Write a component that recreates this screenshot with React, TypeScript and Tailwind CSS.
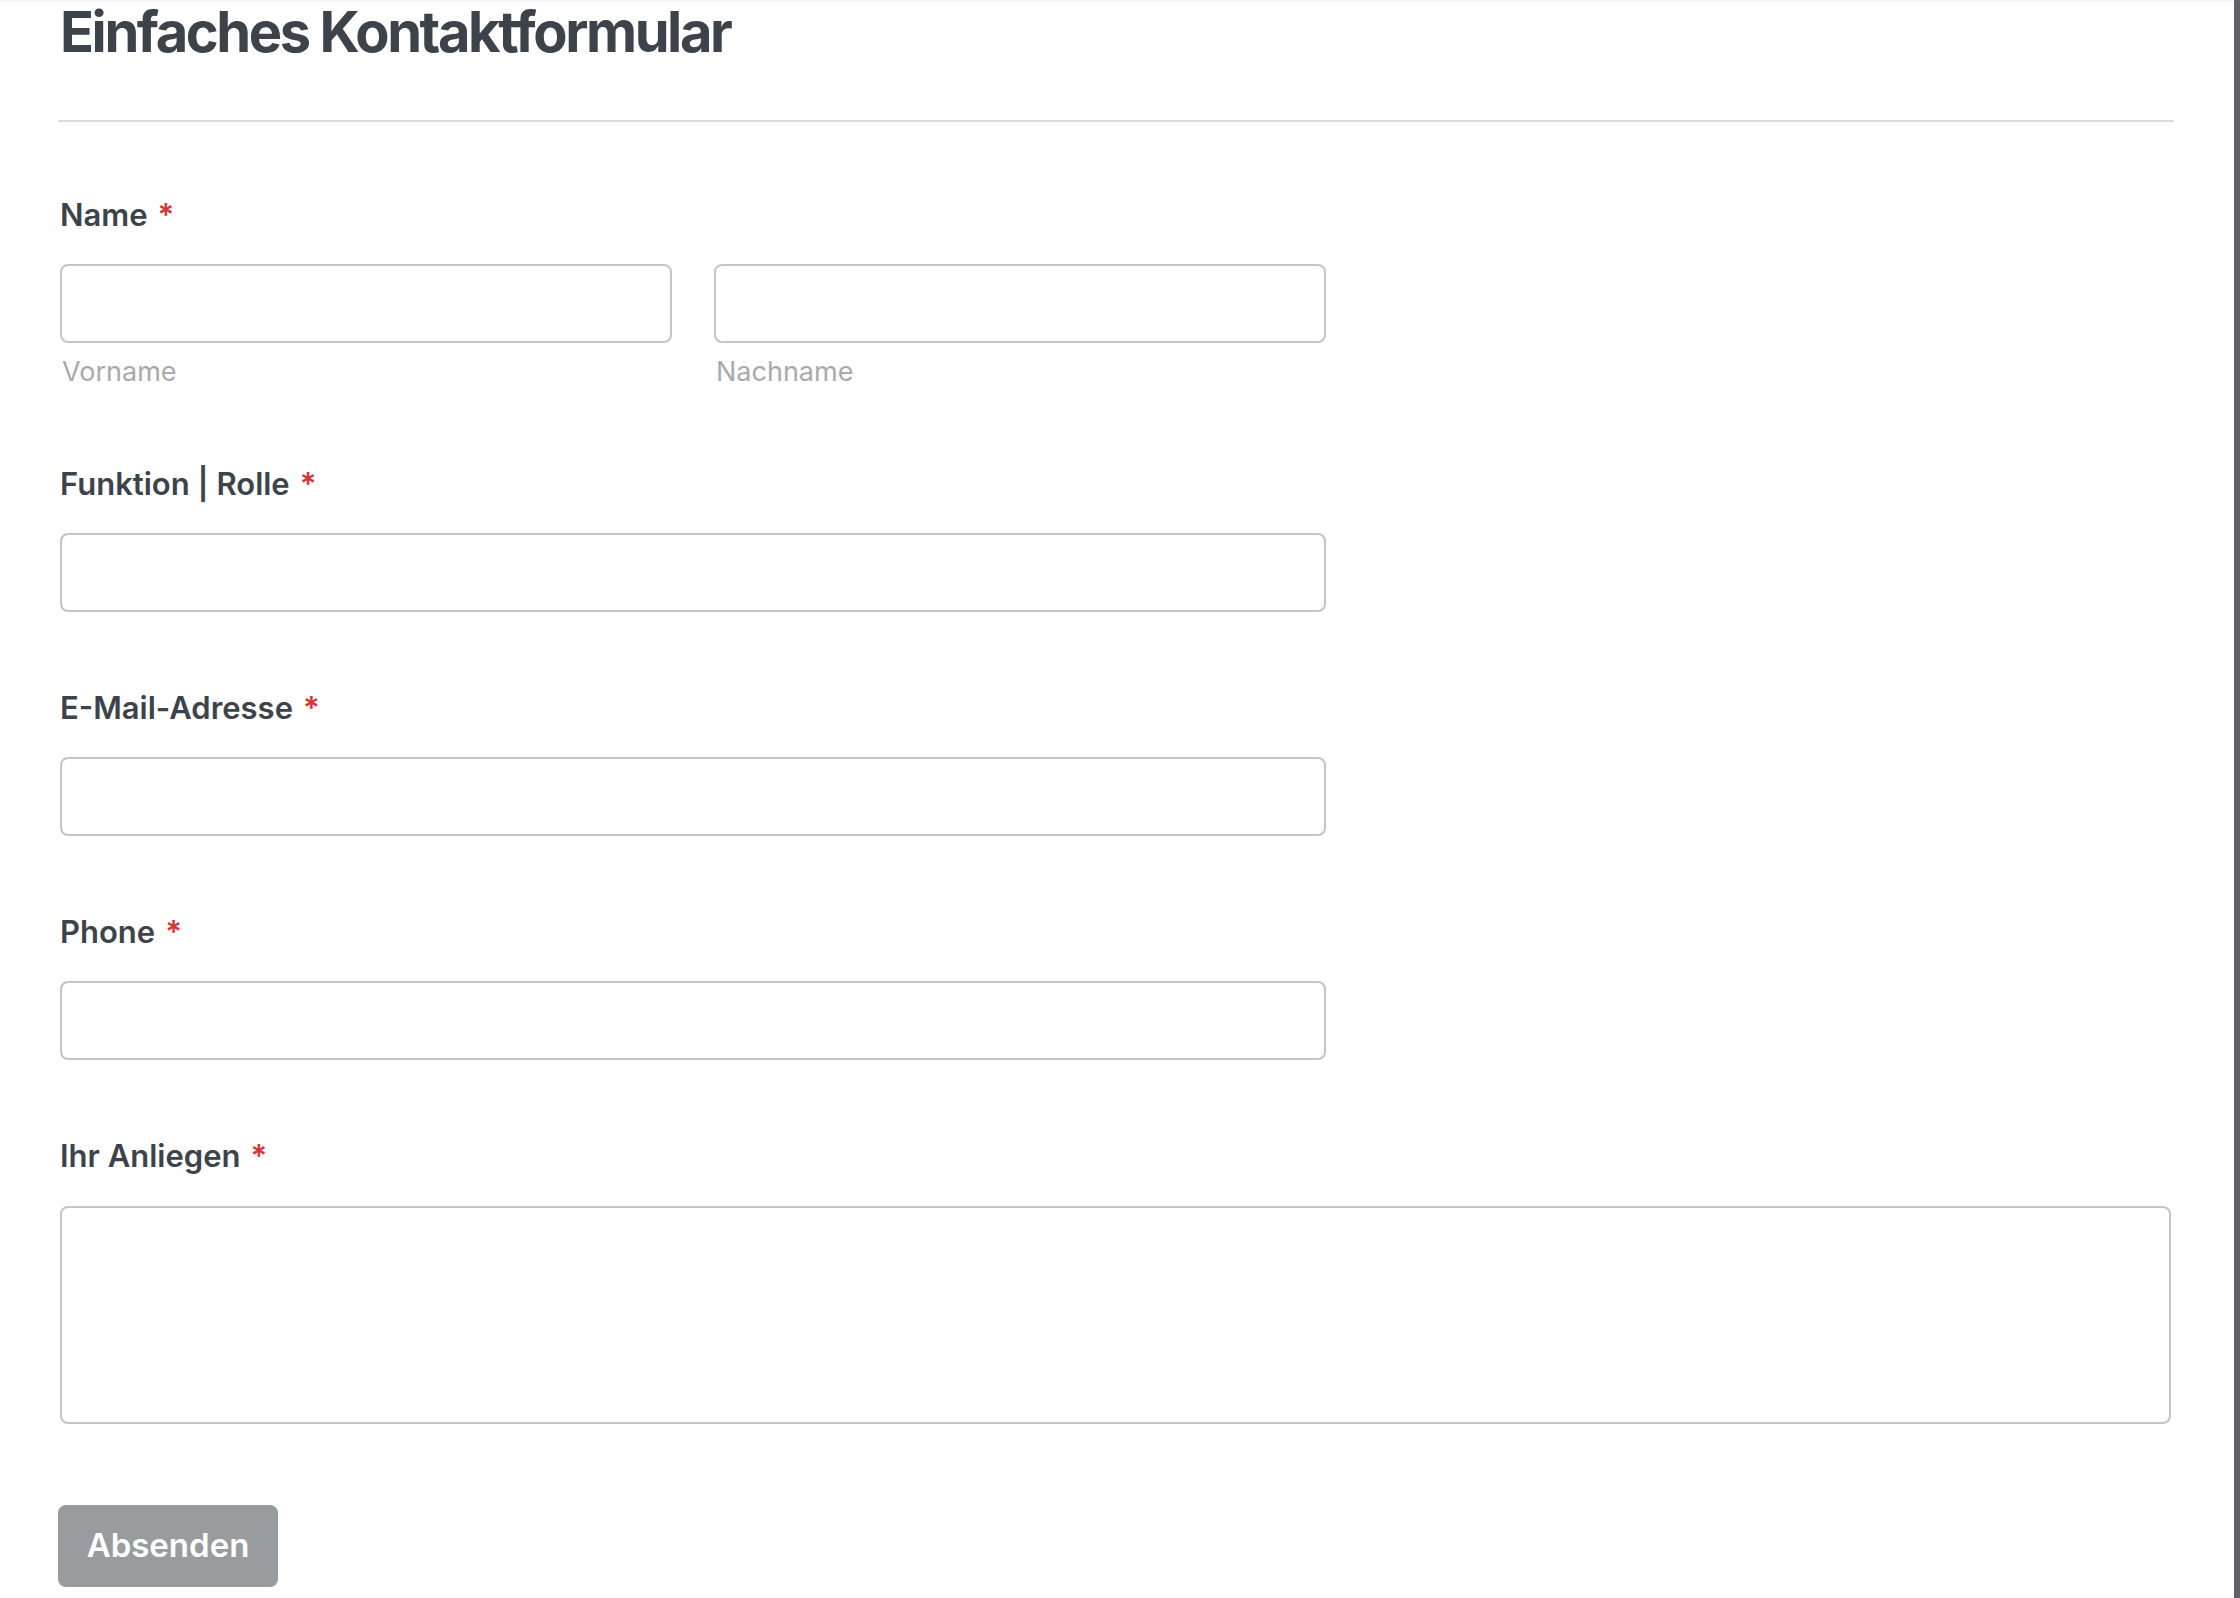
import React from 'react'

const fields = [
  { label: 'Funktion | Rolle', id: 'rolle' },
  { label: 'E-Mail-Adresse', id: 'email' },
  { label: 'Phone', id: 'phone' },
]

function Label({ text }: { text: string }) {
  return (
    <label className="block text-[31px] leading-[36px] font-semibold text-[#3c434a]">
      {text}
      <span className="ml-[10px] text-[#d63638]">*</span>
    </label>
  )
}

export default function App() {
  return (
    <div className="flex min-h-screen bg-white font-['Inter','Noto_Sans',sans-serif]">
      <div className="flex-1 pl-[58px] pr-[60px] border-t-2 border-[#f6f6f6]">
        {/* Heading */}
        <h1 className="text-[56px] leading-[64px] font-bold tracking-[-2.4px] text-[#3c434a] pl-[2px] -mt-[2px]">
          Einfaches Kontaktformular
        </h1>
        <hr className="mt-[56px] h-[2px] border-0 bg-[#dcdcde]" />

        <form className="ml-[2px] mr-[3px] mt-[75px]">
          {/* Name */}
          <div>
            <Label text="Name" />
            <div className="mt-[31px] grid w-[1266px] grid-cols-2 gap-[42px]">
              <div>
                <input className="block h-[79px] w-full rounded-[8px] border-2 border-[#c3c4c7] bg-white" />
                <div className="mt-[13px] text-[27px] leading-[32px] text-[#a7aaad] pl-[2px]">Vorname</div>
              </div>
              <div>
                <input className="block h-[79px] w-full rounded-[8px] border-2 border-[#c3c4c7] bg-white" />
                <div className="mt-[13px] text-[27px] leading-[32px] text-[#a7aaad] pl-[2px]">Nachname</div>
              </div>
            </div>
          </div>

          {/* Single line fields */}
          {fields.map((f) => (
            <div key={f.id} className="mt-[78px]">
              <Label text={f.label} />
              <input className="mt-[31px] block h-[79px] w-[1266px] rounded-[8px] border-2 border-[#c3c4c7] bg-white" />
            </div>
          ))}

          {/* Message */}
          <div className="mt-[78px]">
            <Label text="Ihr Anliegen" />
            <textarea className="mt-[32px] block h-[218px] w-full resize-none rounded-[8px] border-2 border-[#c3c4c7] bg-white" />
          </div>

          <button
            type="button"
            className="-ml-[2px] mt-[81px] h-[82px] w-[220px] rounded-[8px] bg-[#999c9f] text-[33px] font-semibold text-white"
          >
            Absenden
          </button>
        </form>
      </div>
      <div className="w-[6px] bg-[#5f6267]" />
    </div>
  )
}
